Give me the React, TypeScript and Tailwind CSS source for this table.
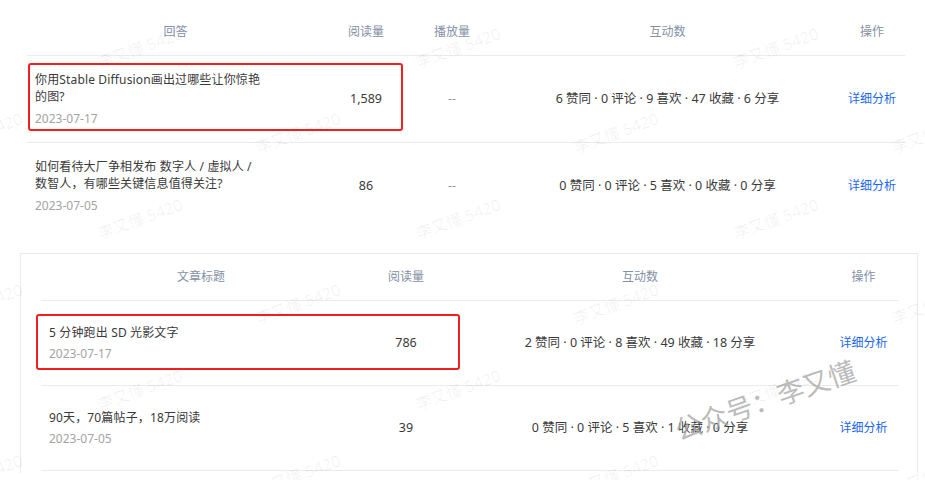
const font = { fontFamily: '"Noto Sans", "Noto Sans CJK SC", sans-serif' };

type Row = {
  title: string[];
  date: string;
  reads: string;
  plays?: string;
  stats: string;
  marked?: boolean;
};

const answers: Row[] = [
  {
    title: ["你用Stable Diffusion画出过哪些让你惊艳", "的图?"],
    date: "2023-07-17",
    reads: "1,589",
    plays: "--",
    stats: "6 赞同 · 0 评论 · 9 喜欢 · 47 收藏 · 6 分享",
    marked: true,
  },
  {
    title: ["如何看待大厂争相发布 数字人 / 虚拟人 /", "数智人，有哪些关键信息值得关注?"],
    date: "2023-07-05",
    reads: "86",
    plays: "--",
    stats: "0 赞同 · 0 评论 · 5 喜欢 · 0 收藏 · 0 分享",
  },
];

const articles: Row[] = [
  {
    title: ["5 分钟跑出 SD 光影文字"],
    date: "2023-07-17",
    reads: "786",
    stats: "2 赞同 · 0 评论 · 8 喜欢 · 49 收藏 · 18 分享",
    marked: true,
  },
  {
    title: ["90天，70篇帖子，18万阅读"],
    date: "2023-07-05",
    reads: "39",
    stats: "0 赞同 · 0 评论 · 5 喜欢 · 1 收藏 · 0 分享",
  },
];

function Title({ row }: { row: Row }) {
  return (
    <div className="pl-2">
      <div className="text-[12px] leading-[17px] tracking-[0.15px] text-[#3a3a3a]">
        {row.title.map((line, i) => (
          <div key={i}>{line}</div>
        ))}
      </div>
      <div className="mt-[5px] text-[12px] leading-[17px] text-[#a3a3a3]">{row.date}</div>
    </div>
  );
}

function Watermarks() {
  const marks: { x: number; y: number }[] = [];
  for (let i = 0; i < 6; i++) {
    for (let j = -1; j < 4; j++) {
      marks.push({ x: 140 + 318 * j + (i % 2 ? -160 : 0), y: 48 + 85.4 * i });
    }
  }
  return (
    <div className="pointer-events-none absolute inset-0 overflow-hidden">
      {marks.map((m, k) => (
        <span
          key={k}
          className="absolute -translate-x-1/2 -translate-y-1/2 -rotate-20 whitespace-nowrap text-[16px] text-black/[0.06]"
          style={{ left: m.x, top: m.y }}
        >
          李又懂 5420
        </span>
      ))}
      <span className="absolute left-[765px] top-[400px] -translate-x-1/2 -translate-y-1/2 -rotate-19 whitespace-nowrap text-[27px] leading-none text-[#a8a8a8]/80">
        公众号：李又懂
      </span>
    </div>
  );
}

export default function App() {
  return (
    <div className="relative h-[480px] w-[925px] overflow-hidden bg-white" style={font}>
      {/* answers table */}
      <div className="ml-[27px] w-[878px]">
        <div className="grid h-[56px] grid-cols-[297px_84px_88px_343px_66px] items-center border-b border-[#ebebeb] pt-[8px] text-center text-[12px] text-[#8590a6]">
          <div>回答</div>
          <div>阅读量</div>
          <div>播放量</div>
          <div>互动数</div>
          <div>操作</div>
        </div>
        {answers.map((row, i) => (
          <div
            key={i}
            className={`relative grid grid-cols-[297px_84px_88px_343px_66px] items-center py-[15px] text-[12.5px] text-[#3a3a3a] ${
              i === 0 ? "border-b border-[#ebebeb]" : ""
            }`}
          >
            <Title row={row} />
            <div className="text-center">{row.reads}</div>
            <div className="text-center text-[#999]">{row.plays}</div>
            <div className="text-center">{row.stats}</div>
            <div className="text-center text-[12px] text-[#1a66f0]">详细分析</div>
            {row.marked && (
              <div className="absolute left-[1px] top-[7px] h-[68px] w-[375px] rounded-[3px] border-2 border-[#f31f1f]" />
            )}
          </div>
        ))}
      </div>

      {/* articles panel */}
      <div className="ml-[20px] mt-[24px] w-[898px] border border-b-0 border-[#ebebeb] pb-[2px] pl-[20px]">
        <div className="w-[857px]">
          <div className="grid h-[47px] grid-cols-[320px_90px_378px_69px] items-center border-b border-[#ebebeb] text-center text-[12px] text-[#8590a6]">
            <div>文章标题</div>
            <div>阅读量</div>
            <div>互动数</div>
            <div>操作</div>
          </div>
          {articles.map((row, i) => (
            <div
              key={i}
              className="relative grid grid-cols-[320px_90px_378px_69px] items-center border-b border-[#ebebeb] py-[23px] text-[12.5px] text-[#3a3a3a]"
            >
              <div className="pl-2 text-[12px]">
                <div className="leading-[17px] tracking-[0.15px]">{row.title[0]}</div>
                <div className="mt-[4px] leading-[17px] text-[#a3a3a3]">{row.date}</div>
              </div>
              <div className="text-center">{row.reads}</div>
              <div className="text-center">{row.stats}</div>
              <div className="text-center text-[12px] text-[#1a66f0]">详细分析</div>
              {row.marked && (
                <div className="absolute left-[-5px] top-[13px] h-[56px] w-[424px] rounded-[3px] border-2 border-[#f31f1f]" />
              )}
            </div>
          ))}
        </div>
      </div>

      <Watermarks />
    </div>
  );
}
